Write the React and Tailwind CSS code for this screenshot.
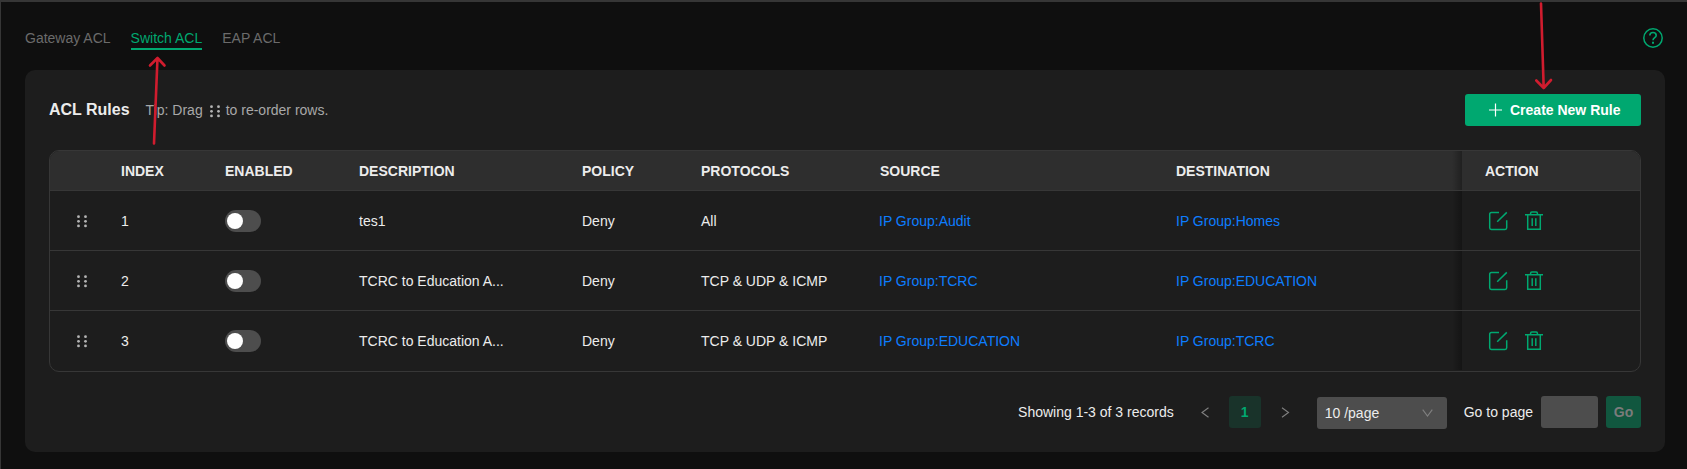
const columns =
  "grid grid-cols-[71px_104px_134px_223px_119px_179px_296px_286px_178px]";

const rules = [
  { index: 1, description: "tes1", protocols: "All", source: "IP Group:Audit", destination: "IP Group:Homes" },
  { index: 2, description: "TCRC to Education A...", protocols: "TCP & UDP & ICMP", source: "IP Group:TCRC", destination: "IP Group:EDUCATION" },
  { index: 3, description: "TCRC to Education A...", protocols: "TCP & UDP & ICMP", source: "IP Group:EDUCATION", destination: "IP Group:TCRC" },
];

function DragDots({ className }) {
  return (
    <svg className={className} width="10" height="13" viewBox="0 0 10 13" fill="#b4b4b4">
      {[1.7, 6.3, 10.9].map((y) => (
        <g key={y}>
          <circle cx="1.5" cy={y} r="1.4" />
          <circle cx="8.5" cy={y} r="1.4" />
        </g>
      ))}
    </svg>
  );
}

function EditIcon() {
  return (
    <svg width="20" height="20" viewBox="0 0 20 20" fill="none" stroke="#00a870" strokeWidth="1.5">
      <path d="M11 1.6H3.4Q1.7 1.6 1.7 3.3V16.7Q1.7 18.4 3.4 18.4H17Q18.7 18.4 18.7 16.7V9.3" />
      <path d="M9.2 10.8L18.8 1.4" />
    </svg>
  );
}

function TrashIcon() {
  return (
    <svg width="20" height="20" viewBox="0 0 20 20" fill="none" stroke="#00a870" strokeWidth="1.5">
      <path d="M1 3.8H19" />
      <path d="M6.6 3.8V2.2Q6.6 1 7.8 1H12.2Q13.4 1 13.4 2.2V3.8" />
      <path d="M3.7 3.8V18.3H16.3V3.8" />
      <path d="M8.2 7.2V15M11.8 7.2V15" />
    </svg>
  );
}

function Toggle() {
  return (
    <button className="mt-px flex h-[22px] w-9 items-center rounded-full bg-[#4d4d4d] pl-0.5">
      <span className="size-4 rounded-full bg-white" />
    </button>
  );
}

function ShadowEdge() {
  return <div className="w-2.5 self-stretch bg-linear-to-r from-transparent to-black/30" />;
}

export default function App() {
  return (
    <div className="relative h-[469px] w-[1687px] overflow-hidden border-t-2 border-l border-[#363636] bg-[#0f0f0f] pl-6 font-['Liberation_Sans',Arial,sans-serif] text-sm leading-5 text-[#ececec]">
      <header className="flex h-[68px] w-[1640px] items-start justify-between">
        <nav className="flex gap-5 pt-[26px] text-[#6b6b6b]">
          <a>Gateway ACL</a>
          <a className="h-[22px] border-b-2 border-[#00a870] text-[#00a870]">Switch ACL</a>
          <a>EAP ACL</a>
        </nav>
        <svg className="mt-[26px] mr-0.5" width="20" height="20" viewBox="0 0 20 20" fill="none" stroke="#00a870" strokeWidth="1.5">
          <circle cx="10" cy="10" r="9.2" />
          <path d="M6.8 7.6C6.8 5.6 8.1 4.5 10 4.5S13.2 5.7 13.2 7.4C13.2 9.6 10 9.7 10 12.3" strokeWidth="1.6" />
          <path d="M10 13.8V15.8" strokeWidth="2" />
        </svg>
      </header>

      <main className="h-[382px] w-[1640px] rounded-[10px] bg-[#1d1d1d] px-6 pt-6">
        <div className="flex h-8 items-center justify-between">
          <div className="flex items-center">
            <h1 className="text-base leading-5 font-bold text-[#ececec]">ACL Rules</h1>
            <p className="ml-4 flex items-center text-[#a8a8a8]">
              Tip: Drag <DragDots className="mt-[3px] mr-1.5 ml-[7px]" /> to re-order rows.
            </p>
          </div>
          <button className="flex h-8 w-44 items-center rounded-[3px] bg-[#00a870] pl-[23px] font-bold text-white">
            <svg width="14" height="14" viewBox="0 0 14 14" stroke="white" strokeWidth="1.2">
              <path d="M7.5 .5V13.5M1 7H14" />
            </svg>
            <span className="ml-2">Create New Rule</span>
          </button>
        </div>

        <section className="mt-6 h-[222px] overflow-hidden rounded-[10px] border border-[#373737]">
          <div className={`${columns} h-10 items-center border-b border-[#373737] bg-[#2e2e2e] font-bold`}>
            <span />
            <span>INDEX</span>
            <span>ENABLED</span>
            <span>DESCRIPTION</span>
            <span>POLICY</span>
            <span>PROTOCOLS</span>
            <span>SOURCE</span>
            <div className="flex items-center justify-between self-stretch">
              DESTINATION
              <ShadowEdge />
            </div>
            <span className="pl-[23px]">ACTION</span>
          </div>
          {rules.map((rule) => (
            <div key={rule.index} className={`${columns} h-[60px] items-center border-b border-[#373737] last:border-transparent`}>
              <DragDots className="mt-0.5 ml-[27px]" />
              <span>{rule.index}</span>
              <Toggle />
              <span>{rule.description}</span>
              <span>Deny</span>
              <span>{rule.protocols}</span>
              <a className="-ml-px text-[#0d7dff]">{rule.source}</a>
              <div className="flex items-center justify-between self-stretch text-[#0d7dff]">
                {rule.destination}
                <ShadowEdge />
              </div>
              <div className="mt-px flex gap-4 pl-[26px]">
                <EditIcon />
                <TrashIcon />
              </div>
            </div>
          ))}
        </section>

        <footer className="mt-6 flex h-[33px] items-start justify-end">
          <span className="mt-1.5">Showing 1-3 of 3 records</span>
          <svg className="mt-[11px] ml-[27px]" width="9" height="11" viewBox="0 0 9 11" fill="none" stroke="#808080" strokeWidth="1.1">
            <path d="M7.5 .8L1 5.5L7.5 10.2" />
          </svg>
          <button className="ml-[19px] size-8 rounded-[3px] bg-[#19332a] font-bold text-[#00a870]">1</button>
          <svg className="mt-[11px] ml-5" width="9" height="11" viewBox="0 0 9 11" fill="none" stroke="#808080" strokeWidth="1.1">
            <path d="M1 .8L7.5 5.5L1 10.2" />
          </svg>
          <div className="mt-px ml-[27px] flex h-8 w-[130px] items-center justify-between rounded-[3px] bg-[#4d4d4d] pr-[14px] pl-2">
            10 /page
            <svg width="11" height="8" viewBox="0 0 11 8" fill="none" stroke="#808080" strokeWidth="1.1">
              <path d="M.7 .7L5.5 7L10.3 .7" />
            </svg>
          </div>
          <span className="mt-1.5 ml-[17px]">Go to page</span>
          <div className="ml-2 h-8 w-[57px] rounded-[3px] bg-[#4d4d4d]" />
          <button className="ml-2 h-8 w-[35px] rounded-[3px] bg-[#11573f] font-bold text-[#7b7b7b]">Go</button>
        </footer>
      </main>

      <svg className="pointer-events-none absolute -top-0.5 -left-px" width="1687" height="160" fill="none" stroke="#d01c2e" strokeWidth="2.6" strokeLinecap="round" strokeLinejoin="round">
        <path d="M154 143.5L157.5 58M150 65.5L157.5 58L164.5 65.5" />
        <path d="M1541 3.5L1543.7 88M1536.3 80.5L1543.7 88L1551 80" />
      </svg>
    </div>
  );
}
